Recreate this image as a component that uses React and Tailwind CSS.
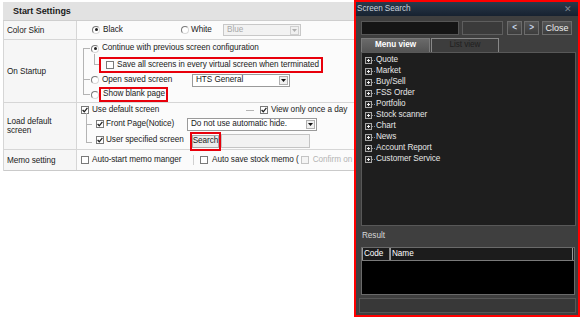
import React from "react";

const Radio = ({ checked }) => (
  <span className="relative inline-block w-[8px] h-[8px] shrink-0 rounded-full bg-white border border-[#7a7a7a] border-r-[#d8d8d8] border-b-[#d8d8d8]">
    {checked && (
      <span className="absolute left-[1.5px] top-[1.5px] w-[3px] h-[3px] rounded-full bg-[#222]" />
    )}
  </span>
);

const Check = ({ checked, disabled }) => (
  <span
    className={
      "inline-flex items-center justify-center w-[8px] h-[8px] shrink-0 border " +
      (disabled ? "border-[#c4c4c4] bg-[#f4f4f4]" : "border-[#7a7a7a] bg-white")
    }
  >
    {checked && (
      <svg width="6" height="6" viewBox="0 0 6 6">
        <path d="M0.6 3 L2.3 4.8 L5.4 0.9" fill="none" stroke="#222" strokeWidth="1.3" />
      </svg>
    )}
  </span>
);

const Select = ({ text, disabled, className }) => (
  <span
    className={
      "flex items-center justify-between border pl-[3px] pr-[1px] " +
      (disabled
        ? "bg-[#f2f2f2] border-[#c8c8c8] text-[#a8a8a8] "
        : "bg-white border-[#9a9a9a] text-[#1a1a1a] ") +
      className
    }
  >
    <span>{text}</span>
    <span
      className={
        "flex items-center justify-center w-[9px] h-[9px] border " +
        (disabled ? "border-[#d0d0d0] bg-[#f0f0f0]" : "border-[#b0b0b0] bg-[#f0f0f0]")
      }
    >
      <svg width="5" height="3" viewBox="0 0 5 3">
        <path d="M0 0 L5 0 L2.5 3 Z" fill={disabled ? "#b0b0b0" : "#111"} />
      </svg>
    </span>
  </span>
);

const Line = ({ className }) => <span className={"absolute bg-[#b4b4b4] " + className} />;

const Label = ({ children }) => (
  <div className="w-[73px] shrink-0 bg-[#f6f6f6] border-r border-[#d6d6d6] flex items-center pl-[3px] leading-[9px]">
    {children}
  </div>
);

const menuItems = [
  "Quote",
  "Market",
  "Buy/Sell",
  "FSS Order",
  "Portfolio",
  "Stock scanner",
  "Chart",
  "News",
  "Account Report",
  "Customer Service",
];

const StartSettings = () => (
  <div className="w-[354px] h-full shrink-0 overflow-hidden bg-white text-[#1a1a1a] pt-[2px] pl-[3px]">
    <div className="w-[400px] h-[19px] bg-[#e2e2e2] border-b border-[#cecece] flex items-center pl-[10px] font-bold text-[9px]">
      Start Settings
    </div>
    <div className="w-[400px] border-l border-[#d6d6d6]">
      {/* Color Skin */}
      <div className="flex h-[19px] border-b border-[#d6d6d6]">
        <Label>Color Skin</Label>
        <div className="flex items-center pl-[15px] bg-[#fbfbfb] flex-1">
          <span className="flex items-center gap-[3px] w-[89px]">
            <Radio checked />
            Black
          </span>
          <span className="flex items-center gap-[2px] w-[42px]">
            <Radio />
            White
          </span>
          <Select text="Blue" disabled className="w-[78px] h-[12px]" />
        </div>
      </div>

      {/* On Startup */}
      <div className="flex h-[63px] border-b border-[#d6d6d6]">
        <Label>On Startup</Label>
        <div className="relative flex flex-col pl-[14px] bg-[#fbfbfb] flex-1">
          <Line className="left-[6px] top-[8px] w-px h-[47px]" />
          <Line className="left-[6px] top-[8px] w-[7px] h-px" />
          <Line className="left-[6px] top-[39px] w-[7px] h-px" />
          <Line className="left-[6px] top-[54px] w-[7px] h-px" />
          <Line className="left-[17px] top-[14px] w-px h-[10px]" />
          <Line className="left-[17px] top-[24px] w-[5px] h-px" />
          <div className="flex items-center gap-[3px] h-[17px]">
            <Radio checked />
            Continue with previous screen configuration
          </div>
          <div className="flex items-center h-[16px]">
            <span className="ml-[8px] w-[224px] h-[16px] border-2 border-[#e8000b] flex items-center gap-[3px] pl-[5px]">
              <Check />
              Save all screens in every virtual screen when terminated
            </span>
          </div>
          <div className="flex items-center h-[14px]">
            <span className="flex items-center gap-[3px] w-[101px]">
              <Radio />
              Open saved screen
            </span>
            <Select text="HTS General" className="w-[98px] h-[13px]" />
          </div>
          <div className="flex items-center h-[15px]">
            <Radio />
            <span className="w-[69px] h-[15px] border-2 border-[#e8000b] flex items-center pl-[2px]">
              Show blank page
            </span>
          </div>
        </div>
      </div>

      {/* Load default screen */}
      <div className="flex h-[47px] border-b border-[#d6d6d6]">
        <Label>
          <span className="whitespace-normal">
            Load default
            <br />
            screen
          </span>
        </Label>
        <div className="relative flex flex-col pl-[4px] bg-[#fbfbfb] flex-1">
          <Line className="left-[9px] top-[10px] w-px h-[29px]" />
          <Line className="left-[9px] top-[21px] w-[6px] h-px" />
          <Line className="left-[9px] top-[39px] w-[6px] h-px" />
          <div className="flex items-center h-[14px]">
            <span className="flex items-center gap-[3px] w-[165px]">
              <Check checked />
              Use default screen
            </span>
            <span className="w-[8px] h-px bg-[#b4b4b4]" />
            <span className="ml-[6px] flex items-center gap-[3px]">
              <Check checked />
              View only once a day
            </span>
          </div>
          <div className="flex items-center h-[15px] pl-[15px]">
            <span className="flex items-center gap-[2px] w-[91px]">
              <Check checked />
              Front Page(Notice)
            </span>
            <Select text="Do not use automatic hide." className="w-[130px] h-[13px]" />
          </div>
          <div className="flex items-center h-[16px] pl-[15px]">
            <span className="flex items-center gap-[2px] w-[94px]">
              <Check checked />
              User specified screen
            </span>
            <span className="w-[31px] h-[19px] mt-[2px] border-2 border-[#e8000b] flex items-center">
              <span className="w-full h-[13px] bg-[#ececec] border border-[#a8a8a8] flex items-center justify-center">
                Search
              </span>
            </span>
            <span className="w-[89px] h-[14px] mt-[1px] bg-[#f2f2f2] border border-[#c4c4c4]" />
          </div>
        </div>
      </div>

      {/* Memo setting */}
      <div className="flex h-[21px] border-b border-[#cacaca]">
        <Label>Memo setting</Label>
        <div className="flex items-center pl-[4px] bg-[#fbfbfb] flex-1">
          <span className="flex items-center gap-[3px] w-[112px]">
            <Check />
            Auto-start memo manger
          </span>
          <span className="w-px h-[10px] bg-[#d0d0d0]" />
          <span className="ml-[6px] flex items-center gap-[4px]">
            <Check />
            Auto save stock memo (
          </span>
          <span className="ml-[2px] flex items-center gap-[4px] text-[#b4b4b4]">
            <Check disabled />
            Confirm on
          </span>
        </div>
      </div>
    </div>
  </div>
);

const ScreenSearch = () => (
  <div className="w-[226px] h-[317px] shrink-0 border-2 border-[#ff0000] bg-[#3f3f3f] flex flex-col text-[#e4e4e4]">
    <div className="h-[14px] bg-gradient-to-b from-[#2a3a4c] to-[#172230] flex items-center justify-between pl-[1px] pr-[6px] text-[#c9d2dc]">
      <span>Screen Search</span>
      <span className="text-[#7f8893] text-[9px]">✕</span>
    </div>

    <div className="flex items-center mt-[5px] pl-[5px] h-[14px]">
      <span className="w-[98px] h-[14px] bg-[#151515] border border-[#565656]" />
      <span className="ml-[3px] w-[41px] h-[14px] bg-[#3b3b3b] border border-[#5e5e5e]" />
      <span className="ml-[4px] w-[15px] h-[14px] bg-gradient-to-b from-[#555] to-[#3d3d3d] border border-[#6c6c6c] flex items-center justify-center text-[#c8d4e8] font-bold">
        &lt;
      </span>
      <span className="ml-[2px] w-[15px] h-[14px] bg-gradient-to-b from-[#555] to-[#3d3d3d] border border-[#6c6c6c] flex items-center justify-center text-[#c8d4e8] font-bold">
        &gt;
      </span>
      <span className="ml-[3px] w-[30px] h-[14px] bg-gradient-to-b from-[#555] to-[#3d3d3d] border border-[#6c6c6c] flex items-center justify-center text-[#f0f0f0] text-[9px]">
        Close
      </span>
    </div>

    <div className="flex mt-[3px] pl-[5px] h-[14px]">
      <span className="w-[69px] h-[14px] bg-gradient-to-b from-[#6a6a6a] to-[#545454] border border-[#7a7a7a] border-b-0 flex items-center justify-center font-bold text-white">
        Menu view
      </span>
      <span className="ml-[1px] w-[68px] h-[14px] bg-[#3d3d3d] border border-[#888] border-b-0 flex items-center justify-center text-[#202020]">
        List view
      </span>
    </div>

    <div className="ml-[5px] w-[215px] h-[174px] bg-[#1e1e1e] border border-[#585858] pt-[2px]">
      {menuItems.map((item) => (
        <div key={item} className="flex items-center h-[11px] pl-[3px]">
          <svg width="10" height="7" viewBox="0 0 10 7" className="shrink-0">
            <rect x="0.5" y="0.5" width="6" height="6" fill="#2a2a2a" stroke="#a8a8a8" />
            <path d="M2 3.5 H5 M3.5 2 V5" stroke="#f0f0f0" strokeWidth="1" />
            <path d="M7 3.5 H10" stroke="#8a8a8a" strokeWidth="1" strokeDasharray="1 1" />
          </svg>
          <span className="ml-[1px] text-[#e6e6e6]">{item}</span>
        </div>
      ))}
    </div>

    <div className="h-[21px] flex items-center pl-[6px] text-[#d8d8d8]">Result</div>

    <div className="ml-[5px] w-[214px] h-[48px] bg-black border border-[#6a6a6a]">
      <div className="flex h-[13px] bg-[#1c1c1c] border-b border-[#7a7a7a] text-white">
        <span className="w-[28px] border-r border-[#8a8a8a] border-l border-l-[#9a9a9a] flex items-center pl-[1px]">
          Code
        </span>
        <span className="flex-1 border-l border-[#9a9a9a] mr-[1px] border-r flex items-center pl-[1px]">
          Name
        </span>
      </div>
    </div>

    <div className="mt-[3px] ml-[3px] w-[217px] h-[15px] bg-[#383838] border border-[#575757]" />
  </div>
);

const App = () => (
  <div className="flex w-[580px] h-[317px] overflow-hidden bg-white font-['Liberation_Sans',Arial,sans-serif] text-[8.2px] tracking-[-0.05px] leading-none whitespace-nowrap">
    <StartSettings />
    <ScreenSearch />
  </div>
);

export default App;
